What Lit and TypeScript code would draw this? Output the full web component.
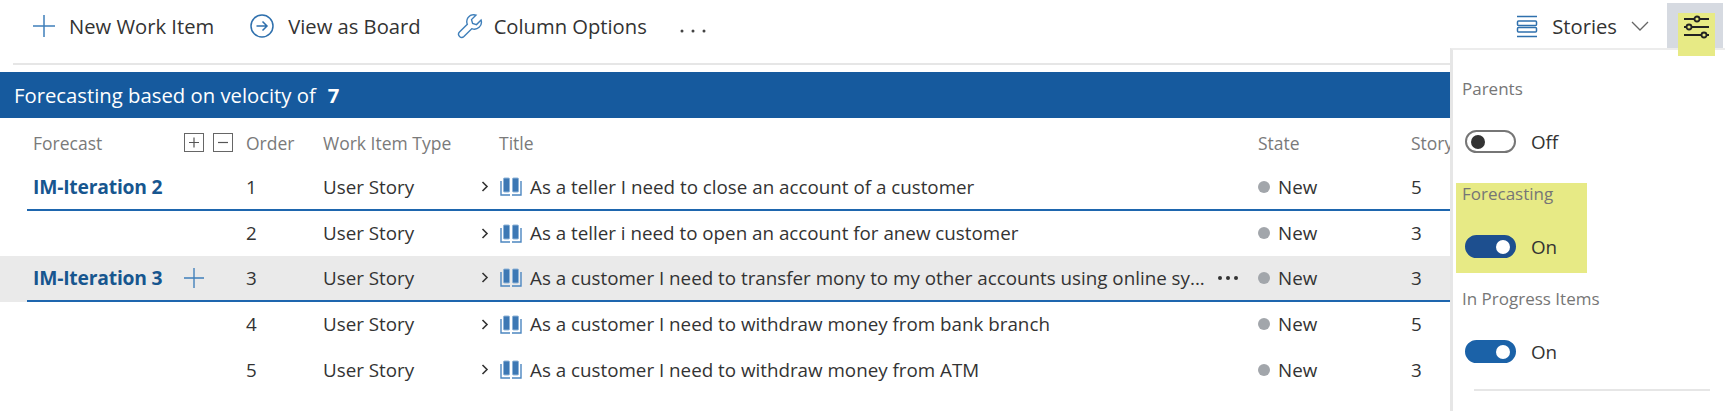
import { LitElement, html, css, svg } from "lit";
import { customElement } from "lit/decorators.js";

const rows = [
  { forecast: "IM-Iteration 2", order: 1, title: "As a teller I need to close an account of a customer", points: 5, line: true },
  { forecast: "", order: 2, title: "As a teller i need to open an account for anew customer", points: 3, line: false },
  { forecast: "IM-Iteration 3", order: 3, title: "As a customer I need to transfer mony to my other accounts using online sy...", points: 3, line: true, hover: true },
  { forecast: "", order: 4, title: "As a customer I need to withdraw money from bank branch", points: 5, line: false },
  { forecast: "", order: 5, title: "As a customer I need to withdraw money from ATM", points: 3, line: false },
];

const plusIcon = svg`<path d="M11 0v22M0 11h22" fill="none" stroke="#3f7fba" stroke-width="1.5"/>`;

const bookIcon = html`<svg class="book" width="22" height="19" viewBox="0 0 22 19">
  <rect x="3.5" y="1" width="6" height="14" rx="1" fill="#3d78b4" stroke="#8fb4d8"/>
  <rect x="12.5" y="1" width="6" height="14" rx="1" fill="#3d78b4" stroke="#8fb4d8"/>
  <path d="M1 4v14h9M21 4v14h-9" fill="none" stroke="#4c86c0" stroke-width="1.4"/>
</svg>`;

@customElement("app-root")
export class AppRoot extends LitElement {
  static styles = css`
    :host {
      display: block;
      position: relative;
      height: 411px;
      overflow: hidden;
      background: #fff;
      color: #333;
      font-family: "Open Sans", "Noto Sans", sans-serif;
      font-size: 18.8px;
    }
    svg {
      display: block;
    }
    .toolbar {
      display: flex;
      align-items: center;
      height: 63px;
      padding: 0 2px 11px 33px;
      box-sizing: border-box;
      font-size: 20.2px;
    }
    .tool {
      display: flex;
      align-items: center;
      margin-right: 36px;
      gap: 14px;
      white-space: nowrap;
    }
    .wrench {
      margin-right: -3px;
    }
    .more {
      margin-top: 9px;
      margin-left: -3px;
    }
    .spacer {
      flex: 1;
    }
    .stories {
      display: flex;
      align-items: center;
      gap: 14px;
      margin-right: 18px;
    }
    .settings {
      position: relative;
      width: 56px;
      height: 47px;
      margin-top: 1px;
      background: #d6dae1;
    }
    .mark {
      position: absolute;
      left: 11px;
      top: 10px;
      width: 37px;
      height: 43px;
      background: #e7ea85;
      z-index: 2;
    }
    .mark svg {
      position: absolute;
      left: 6px;
      top: 2px;
    }
    .rule {
      height: 2px;
      margin: 0 273px 0 13px;
      background: #e6e6e6;
    }
    .banner {
      display: flex;
      align-items: center;
      gap: 12px;
      margin: 7px 273px 0 0;
      height: 46px;
      padding-left: 14px;
      background: #165a9e;
      color: #fff;
      font-size: 20.3px;
    }
    .grid {
      display: grid;
      grid-template-columns: 151px 29px 33px 77px 158px 777px 153px 41px;
      align-items: center;
      padding-left: 33px;
      margin-right: 273px;
      white-space: nowrap;
    }
    .head {
      box-sizing: border-box;
      height: 47px;
      padding-top: 2px;
      color: #7a7a7a;
      font-size: 17.5px;
    }
    .boxes {
      grid-column: span 2;
      display: flex;
      gap: 9px;
    }
    .box {
      display: flex;
      width: 20px;
      height: 19px;
      box-sizing: border-box;
      border: 1px solid #666;
    }
    .title-head {
      padding-left: 18px;
    }
    .row {
      display: flex;
      flex-direction: column;
      height: 45.5px;
    }
    .row.hover {
      background: #eaeaea;
      margin-right: 273px;
    }
    .row .grid {
      flex: 1;
      height: 0;
    }
    .row.hover .grid {
      margin-right: 0;
    }
    .line {
      height: 2px;
      margin: 0 273px 0 27px;
      background: #1e66ae;
    }
    .row.hover .line {
      margin-right: 0;
    }
    .iter {
      color: #17568f;
      font-weight: 700;
      font-size: 19.3px;
      letter-spacing: -0.2px;
    }
    .title {
      display: flex;
      align-items: center;
      min-width: 0;
    }
    .chev {
      width: 19px;
      flex: none;
    }
    .book {
      flex: none;
      margin-right: 8px;
    }
    .text {
      flex: 1;
      min-width: 0;
    }
    .dots {
      flex: none;
      width: 45px;
    }
    .state {
      display: flex;
      align-items: center;
      gap: 8px;
    }
    .dot {
      width: 12px;
      height: 12px;
      border-radius: 50%;
      background: #a2a6ab;
    }
    .panel {
      position: absolute;
      left: 1450px;
      right: 0;
      top: 48px;
      bottom: 0;
      box-sizing: border-box;
      padding: 28px 0 0 3px;
      border-left: 3px solid #e6e6e6;
      border-top: 2px solid #ececec;
      background: #fff;
      z-index: 1;
    }
    .section {
      box-sizing: border-box;
      width: 131px;
      height: 90px;
      margin-bottom: 15px;
      padding-left: 6px;
      white-space: nowrap;
    }
    .section.marked {
      background: #e7ea85;
    }
    .label {
      line-height: 22px;
      font-size: 17px;
      color: #767676;
    }
    .switch {
      display: flex;
      align-items: center;
      gap: 15px;
      margin: 30px 0 0 3px;
      height: 23px;
    }
    .toggle {
      display: flex;
      align-items: center;
      width: 51px;
      height: 23px;
      box-sizing: border-box;
      border-radius: 12px;
      padding: 0 4px;
      border: 2px solid #767676;
    }
    .toggle.on {
      justify-content: flex-end;
      background: #1b62a8;
      border-color: #1b62a8;
    }
    .marked .toggle.on {
      background: #1d4f8f;
      border-color: #1d4f8f;
    }
    .knob {
      width: 14px;
      height: 14px;
      border-radius: 50%;
      background: #333;
    }
    .on .knob {
      background: #fff;
    }
    .divider {
      height: 2px;
      margin: -4px 15px 0 18px;
      background: #e6e6e6;
    }
  `;

  private renderSwitch(label: string, on: boolean, marked = false) {
    return html`<div class="section ${marked ? "marked" : ""}">
      <div class="label">${label}</div>
      <div class="switch">
        <div class="toggle ${on ? "on" : ""}"><div class="knob"></div></div>
        <span>${on ? "On" : "Off"}</span>
      </div>
    </div>`;
  }

  private renderRow(r: (typeof rows)[number]) {
    return html`<div class="row ${r.hover ? "hover" : ""}">
      <div class="grid">
        <div class="iter">${r.forecast}</div>
        <div>
          ${r.hover
            ? html`<svg width="20" height="20" viewBox="0 0 22 22">${plusIcon}</svg>`
            : ""}
        </div>
        <div></div>
        <div>${r.order}</div>
        <div>User Story</div>
        <div class="title">
          <svg class="chev" height="11" viewBox="0 0 19 11">
            <path d="M1.5 1l4.5 4.5-4.5 4.5" fill="none" stroke="#333" stroke-width="1.6"/>
          </svg>
          ${bookIcon}
          <span class="text">${r.title}</span>
          ${r.hover
            ? html`<svg class="dots" height="4" viewBox="0 0 45 4">
                <circle cx="7" cy="2" r="2" fill="#333"/>
                <circle cx="15" cy="2" r="2" fill="#333"/>
                <circle cx="23" cy="2" r="2" fill="#333"/>
              </svg>`
            : ""}
        </div>
        <div class="state"><span class="dot"></span>New</div>
        <div>${r.points}</div>
      </div>
      ${r.line ? html`<div class="line"></div>` : ""}
    </div>`;
  }

  render() {
    return html`
      <div class="toolbar">
        <div class="tool">
          <svg width="22" height="22" viewBox="0 0 22 22">${plusIcon}</svg>
          New Work Item
        </div>
        <div class="tool">
          <svg width="24" height="24" viewBox="0 0 24 24" fill="none" stroke="#2f70ad" stroke-width="1.5">
            <circle cx="12" cy="12" r="11"/>
            <path d="M6.5 12h10.5M12.5 7.5l4.5 4.5-4.5 4.5"/>
          </svg>
          View as Board
        </div>
        <div class="tool">
          <svg class="wrench" width="26" height="26" viewBox="0 0 24 24" fill="none" stroke="#3f7fba" stroke-width="1.3">
            <path d="M15.5 1.5a6.5 6.5 0 0 0-6 8.9L2.3 17.6a2.9 2.9 0 0 0 4.1 4.1l7.2-7.2a6.5 6.5 0 0 0 8.6-8l-4.2 4.2-3.6-1-1-3.6 4.2-4.2a6.5 6.5 0 0 0-2.1-.4z"/>
          </svg>
          Column Options
        </div>
        <svg class="more" width="26" height="4" viewBox="0 0 26 4" fill="#444">
          <circle cx="2" cy="2" r="1.5"/>
          <circle cx="13" cy="2" r="1.5"/>
          <circle cx="24" cy="2" r="1.5"/>
        </svg>
        <div class="spacer"></div>
        <div class="stories">
          <svg width="22" height="23" viewBox="0 0 22 23" fill="none" stroke="#2f70ad" stroke-width="1.5">
            <path d="M1 1.5h20M1 21.5h20"/>
            <rect x="1.5" y="6" width="19" height="4.5" rx="1"/>
            <rect x="1.5" y="12.5" width="19" height="4.5" rx="1"/>
          </svg>
          Stories
          <svg width="18" height="10" viewBox="0 0 18 10">
            <path d="M1 1l8 8 8-8" fill="none" stroke="#666" stroke-width="1.3"/>
          </svg>
        </div>
        <div class="settings">
          <div class="mark">
            <svg width="25" height="24" viewBox="0 0 25 24" fill="none" stroke="#222" stroke-width="1.8">
              <path d="M0 4h25M0 12h25M0 20h25"/>
              <circle cx="13" cy="4" r="2.5" fill="#e7ea85"/>
              <circle cx="5" cy="12" r="2.5" fill="#e7ea85"/>
              <circle cx="20" cy="20" r="2.5" fill="#e7ea85"/>
            </svg>
          </div>
        </div>
      </div>
      <div class="rule"></div>
      <div class="banner">
        <span>Forecasting based on velocity of</span><b>7</b>
      </div>
      <div class="grid head">
        <div>Forecast</div>
        <div class="boxes">
          <div class="box">
            <svg width="18" height="17" viewBox="0 0 18 17"><path d="M9 3.5v10M4 8.5h10" stroke="#555" stroke-width="1.2"/></svg>
          </div>
          <div class="box">
            <svg width="18" height="17" viewBox="0 0 18 17"><path d="M4 8.5h10" stroke="#555" stroke-width="1.2"/></svg>
          </div>
        </div>
        <div>Order</div>
        <div>Work Item Type</div>
        <div class="title-head">Title</div>
        <div>State</div>
        <div>Story</div>
      </div>
      ${rows.map((r) => this.renderRow(r))}
      <div class="panel">
        ${this.renderSwitch("Parents", false)}
        ${this.renderSwitch("Forecasting", true, true)}
        ${this.renderSwitch("In Progress Items", true)}
        <div class="divider"></div>
      </div>
    `;
  }
}
